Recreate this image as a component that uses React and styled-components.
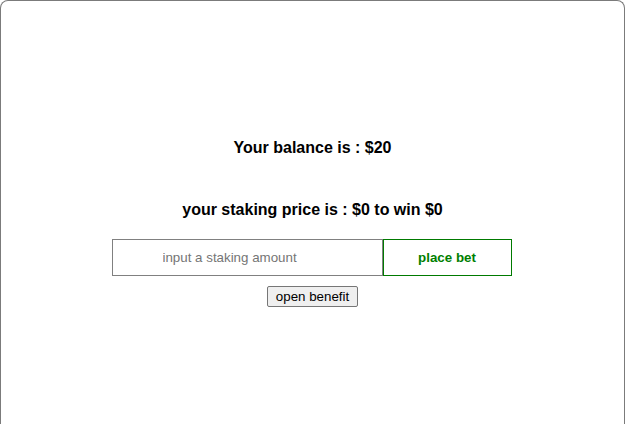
import styled, { createGlobalStyle } from 'styled-components';
import { useState } from 'react';

const GlobalStyle = createGlobalStyle`
  html, body {
    margin: 0;
    padding: 0;
    background: #ffffff;
    overflow: hidden;
  }
  body {
    font-family: "Liberation Sans", Arial, sans-serif;
  }
`;

const Frame = styled.div`
  box-sizing: border-box;
  width: 625px;
  height: 424px;
  border: 1px solid #7b7b7b;
  border-bottom: none;
  border-radius: 8px 8px 0 0;
  background: #fff;
  display: flex;
  flex-direction: column;
  align-items: center;
  padding-top: 138px;
`;

const Title = styled.h3`
  margin: 0 0 ${(p) => p.gap}px;
  font-size: 16px;
  font-weight: bold;
  color: #000;
  line-height: 18px;
`;

const BetRow = styled.div`
  display: flex;
  margin: 0 2px 10px 0;
`;

const StakeInput = styled.input`
  box-sizing: border-box;
  width: 271px;
  height: 37px;
  border: 1px solid #808080;
  outline: none;
  text-align: left;
  font-family: "Liberation Sans", Arial, sans-serif;
  font-size: 13.33px;
  color: #000;
  padding: 0 0 0 50px;

  &::placeholder {
    color: #757575;
  }
`;

const BetButton = styled.button`
  box-sizing: border-box;
  width: 129px;
  height: 37px;
  border: 1px solid #007a00;
  background: #fff;
  color: #008000;
  font-family: "Liberation Sans", Arial, sans-serif;
  font-size: 13.33px;
  font-weight: bold;
  cursor: pointer;
`;

const PlainButton = styled.button`
  box-sizing: border-box;
  height: 21px;
  padding: 1px 8px;
  border: 1px solid #767676;
  border-radius: 2px;
  background: #efefef;
  color: #000;
  font-family: "Liberation Sans", Arial, sans-serif;
  font-size: 13.33px;
  line-height: 16px;
  cursor: pointer;
`;

const App = () => {
  const [balance] = useState(20);
  const [stake, setStake] = useState('');

  return (
    <>
      <GlobalStyle />
      <Frame>
        <Title gap={44}>Your balance is : ${balance}</Title>
        <Title gap={20}>your staking price is : $0 to win $0</Title>
        <BetRow>
          <StakeInput
            placeholder="input a staking amount"
            value={stake}
            onChange={(e) => setStake(e.target.value)}
          />
          <BetButton>place bet</BetButton>
        </BetRow>
        <PlainButton>open benefit</PlainButton>
      </Frame>
    </>
  );
};

export default App;
